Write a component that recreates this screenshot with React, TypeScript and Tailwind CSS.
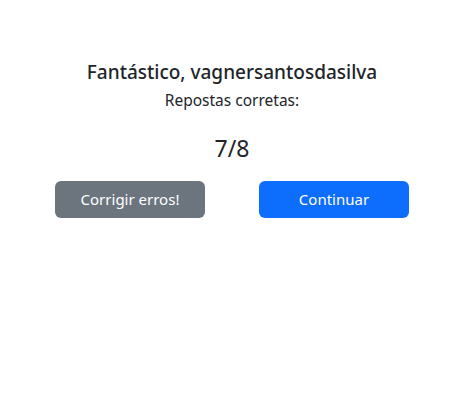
const App = () => {
  return (
    <div className="w-[464px] h-[400px] bg-white flex flex-col items-center pt-[58px] text-[#212529] font-['Noto_Sans',sans-serif]">
      <h5 className="text-[19px] leading-[28px] font-medium">
        Fantástico, vagnersantosdasilva
      </h5>
      <p className="mt-[2px] text-[15.5px] leading-[24px]">Repostas corretas:</p>
      <p className="mt-[21px] text-[23px] leading-[30px]">7/8</p>
      <div className="mt-[18px] flex gap-[54px]">
        <button className="w-[150px] h-[37px] rounded-[6px] bg-[#6c757d] text-white text-[15px]">
          Corrigir erros!
        </button>
        <button className="w-[150px] h-[37px] rounded-[6px] bg-[#0d6efd] text-white text-[15px]">
          Continuar
        </button>
      </div>
    </div>
  );
};

export default App;
